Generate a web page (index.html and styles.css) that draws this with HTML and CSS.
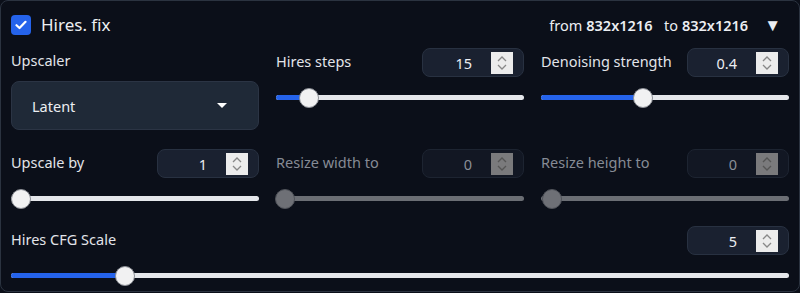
FILE: index.html
```html
<!DOCTYPE html>
<html lang="en">
<head>
    <meta charset="UTF-8">
    <title>Hires. fix</title>
    <link rel="stylesheet" href="styles.css">
</head>
<body>

    <div class="panel">
        <div class="header">
            <label class="check">
                <span class="box">
                    <svg width="12" height="10" viewBox="0 0 12 10"><path d="M1.5 5.2 L4.5 8 L10.5 1.8" fill="none" stroke="#fff" stroke-width="2.2" stroke-linecap="round" stroke-linejoin="round"/></svg>
                </span>
                <span class="title">Hires. fix</span>
            </label>
            <div class="info">
                from <b>832x1216</b>&nbsp; to <b>832x1216</b>
                <span class="arrow">&#9660;</span>
            </div>
        </div>

        <div class="grid">
            <!-- row 1 -->
            <div class="cell">
                <div class="label plain">Upscaler</div>
                <div class="dropdown">
                    <span>Latent</span>
                    <span class="caret"></span>
                </div>
            </div>
            <div class="cell">
                <div class="top">
                    <span class="label">Hires steps</span>
                    <div class="number"><span>15</span><i class="spin"></i></div>
                </div>
                <div class="slider"><div class="fill" style="width: 13.4%"></div><div class="thumb" style="left: 13.4%"></div></div>
            </div>
            <div class="cell">
                <div class="top">
                    <span class="label">Denoising strength</span>
                    <div class="number"><span>0.4</span><i class="spin"></i></div>
                </div>
                <div class="slider"><div class="fill" style="width: 41%"></div><div class="thumb" style="left: 41%"></div></div>
            </div>

            <!-- row 2 -->
            <div class="cell row2">
                <div class="top">
                    <span class="label">Upscale by</span>
                    <div class="number"><span>1</span><i class="spin"></i></div>
                </div>
                <div class="slider"><div class="thumb" style="left: 4%"></div></div>
            </div>
            <div class="cell row2 disabled">
                <div class="top">
                    <span class="label">Resize width to</span>
                    <div class="number"><span>0</span><i class="spin"></i></div>
                </div>
                <div class="slider"><div class="thumb" style="left: 3.6%"></div></div>
            </div>
            <div class="cell row2 disabled">
                <div class="top">
                    <span class="label">Resize height to</span>
                    <div class="number"><span>0</span><i class="spin"></i></div>
                </div>
                <div class="slider"><div class="thumb" style="left: 4.4%"></div></div>
            </div>
        </div>

        <div class="wide">
            <div class="top">
                <span class="label">Hires CFG Scale</span>
                <div class="number"><span>5</span><i class="spin"></i></div>
            </div>
            <div class="slider"><div class="fill" style="width: 14.7%"></div><div class="thumb" style="left: 14.7%"></div></div>
        </div>
    </div>

</body>
</html>
```

FILE: styles.css
```css
body {
    margin: 0;
    background: #0b0f19;
    font-family: "Noto Sans", sans-serif;
    color: #e5e7eb;
}
.panel {
    height: 292px;
    box-sizing: border-box;
    border: 1px solid #2b3340;
    border-radius: 8px;
    padding: 0 10px 0 10px;
    background: #0b0f19;
}
.header {
    display: flex;
    justify-content: space-between;
    align-items: center;
    height: 47px;
}
.check {
    display: flex;
    align-items: center;
    gap: 10px;
}
.box {
    width: 20px;
    height: 20px;
    border-radius: 4px;
    background: #2563eb;
    display: flex;
    align-items: center;
    justify-content: center;
}
.title {
    font-size: 17px;
    color: #eceef2;
}
.info {
    font-size: 14.5px;
    color: #eceef2;
    display: flex;
    align-items: center;
    gap: 4px;
}
.info b {
    font-weight: 600;
}
.arrow {
    font-size: 17px;
    margin-left: 12px;
    margin-right: 8px;
}
.grid {
    display: grid;
    grid-template-columns: repeat(3, 1fr);
    column-gap: 17px;
}
.cell {
    display: flex;
    flex-direction: column;
}
.cell.row2 {
    margin-top: 19px;
}
.top {
    display: flex;
    justify-content: space-between;
    align-items: center;
    height: 29px;
}
.label {
    font-size: 14.5px;
    color: #e2e4e9;
    margin-top: -4px;
}
.label.plain {
    height: 29px;
    line-height: 24px;
    margin-top: 0;
}
.disabled .label {
    color: #868b95;
}
.number {
    width: 102px;
    height: 29px;
    box-sizing: border-box;
    border: 1px solid #283141;
    border-radius: 8px;
    background: #1a2130;
    display: flex;
    align-items: center;
    justify-content: flex-end;
    padding-right: 10px;
    font-size: 14.5px;
    color: #eceef2;
}
.number span {
    margin-right: 19px;
}
.disabled .number {
    background: #121723;
    border-color: #1d2431;
    color: #8a8f98;
}
.spin {
    width: 22px;
    height: 22px;
    background: #ececec url("data:image/svg+xml,%3Csvg xmlns='http://www.w3.org/2000/svg' width='22' height='22'%3E%3Cpath d='M7 9 L11 5 L15 9 M7 13 L11 17 L15 13' fill='none' stroke='%23888' stroke-width='1.3'/%3E%3C/svg%3E") no-repeat center;
}
.disabled .spin {
    background-color: #7a7a7c;
    background-image: url("data:image/svg+xml,%3Csvg xmlns='http://www.w3.org/2000/svg' width='22' height='22'%3E%3Cpath d='M7 9 L11 5 L15 9 M7 13 L11 17 L15 13' fill='none' stroke='%23555' stroke-width='1.3'/%3E%3C/svg%3E");
}
.slider {
    position: relative;
    height: 5px;
    border-radius: 3px;
    background: #e5e7eb;
    margin: 18px 0 17px;
}
.fill {
    height: 100%;
    border-radius: 3px;
    background: #2563eb;
}
.thumb {
    position: absolute;
    top: 50%;
    width: 20px;
    height: 20px;
    box-sizing: border-box;
    border-radius: 50%;
    background: #f1f1f2;
    border: 1.5px solid #8c8f96;
    transform: translate(-50%, -50%);
}
.disabled .slider {
    background: #6b6e74;
}
.disabled .thumb {
    background: #6e7076;
    border-color: #50535a;
}
.dropdown {
    height: 49px;
    box-sizing: border-box;
    border: 1px solid #2b3444;
    border-radius: 8px;
    background: #1f2937;
    display: flex;
    align-items: center;
    justify-content: space-between;
    padding: 0 31px 0 20px;
    font-size: 14.5px;
    color: #eceef2;
    margin-top: 4px;
}
.caret {
    width: 0;
    height: 0;
    border-left: 5px solid transparent;
    border-right: 5px solid transparent;
    border-top: 5px solid #fff;
}
.wide {
    margin-top: 8px;
}
.wide .slider {
    margin-top: 18px;
}
```
